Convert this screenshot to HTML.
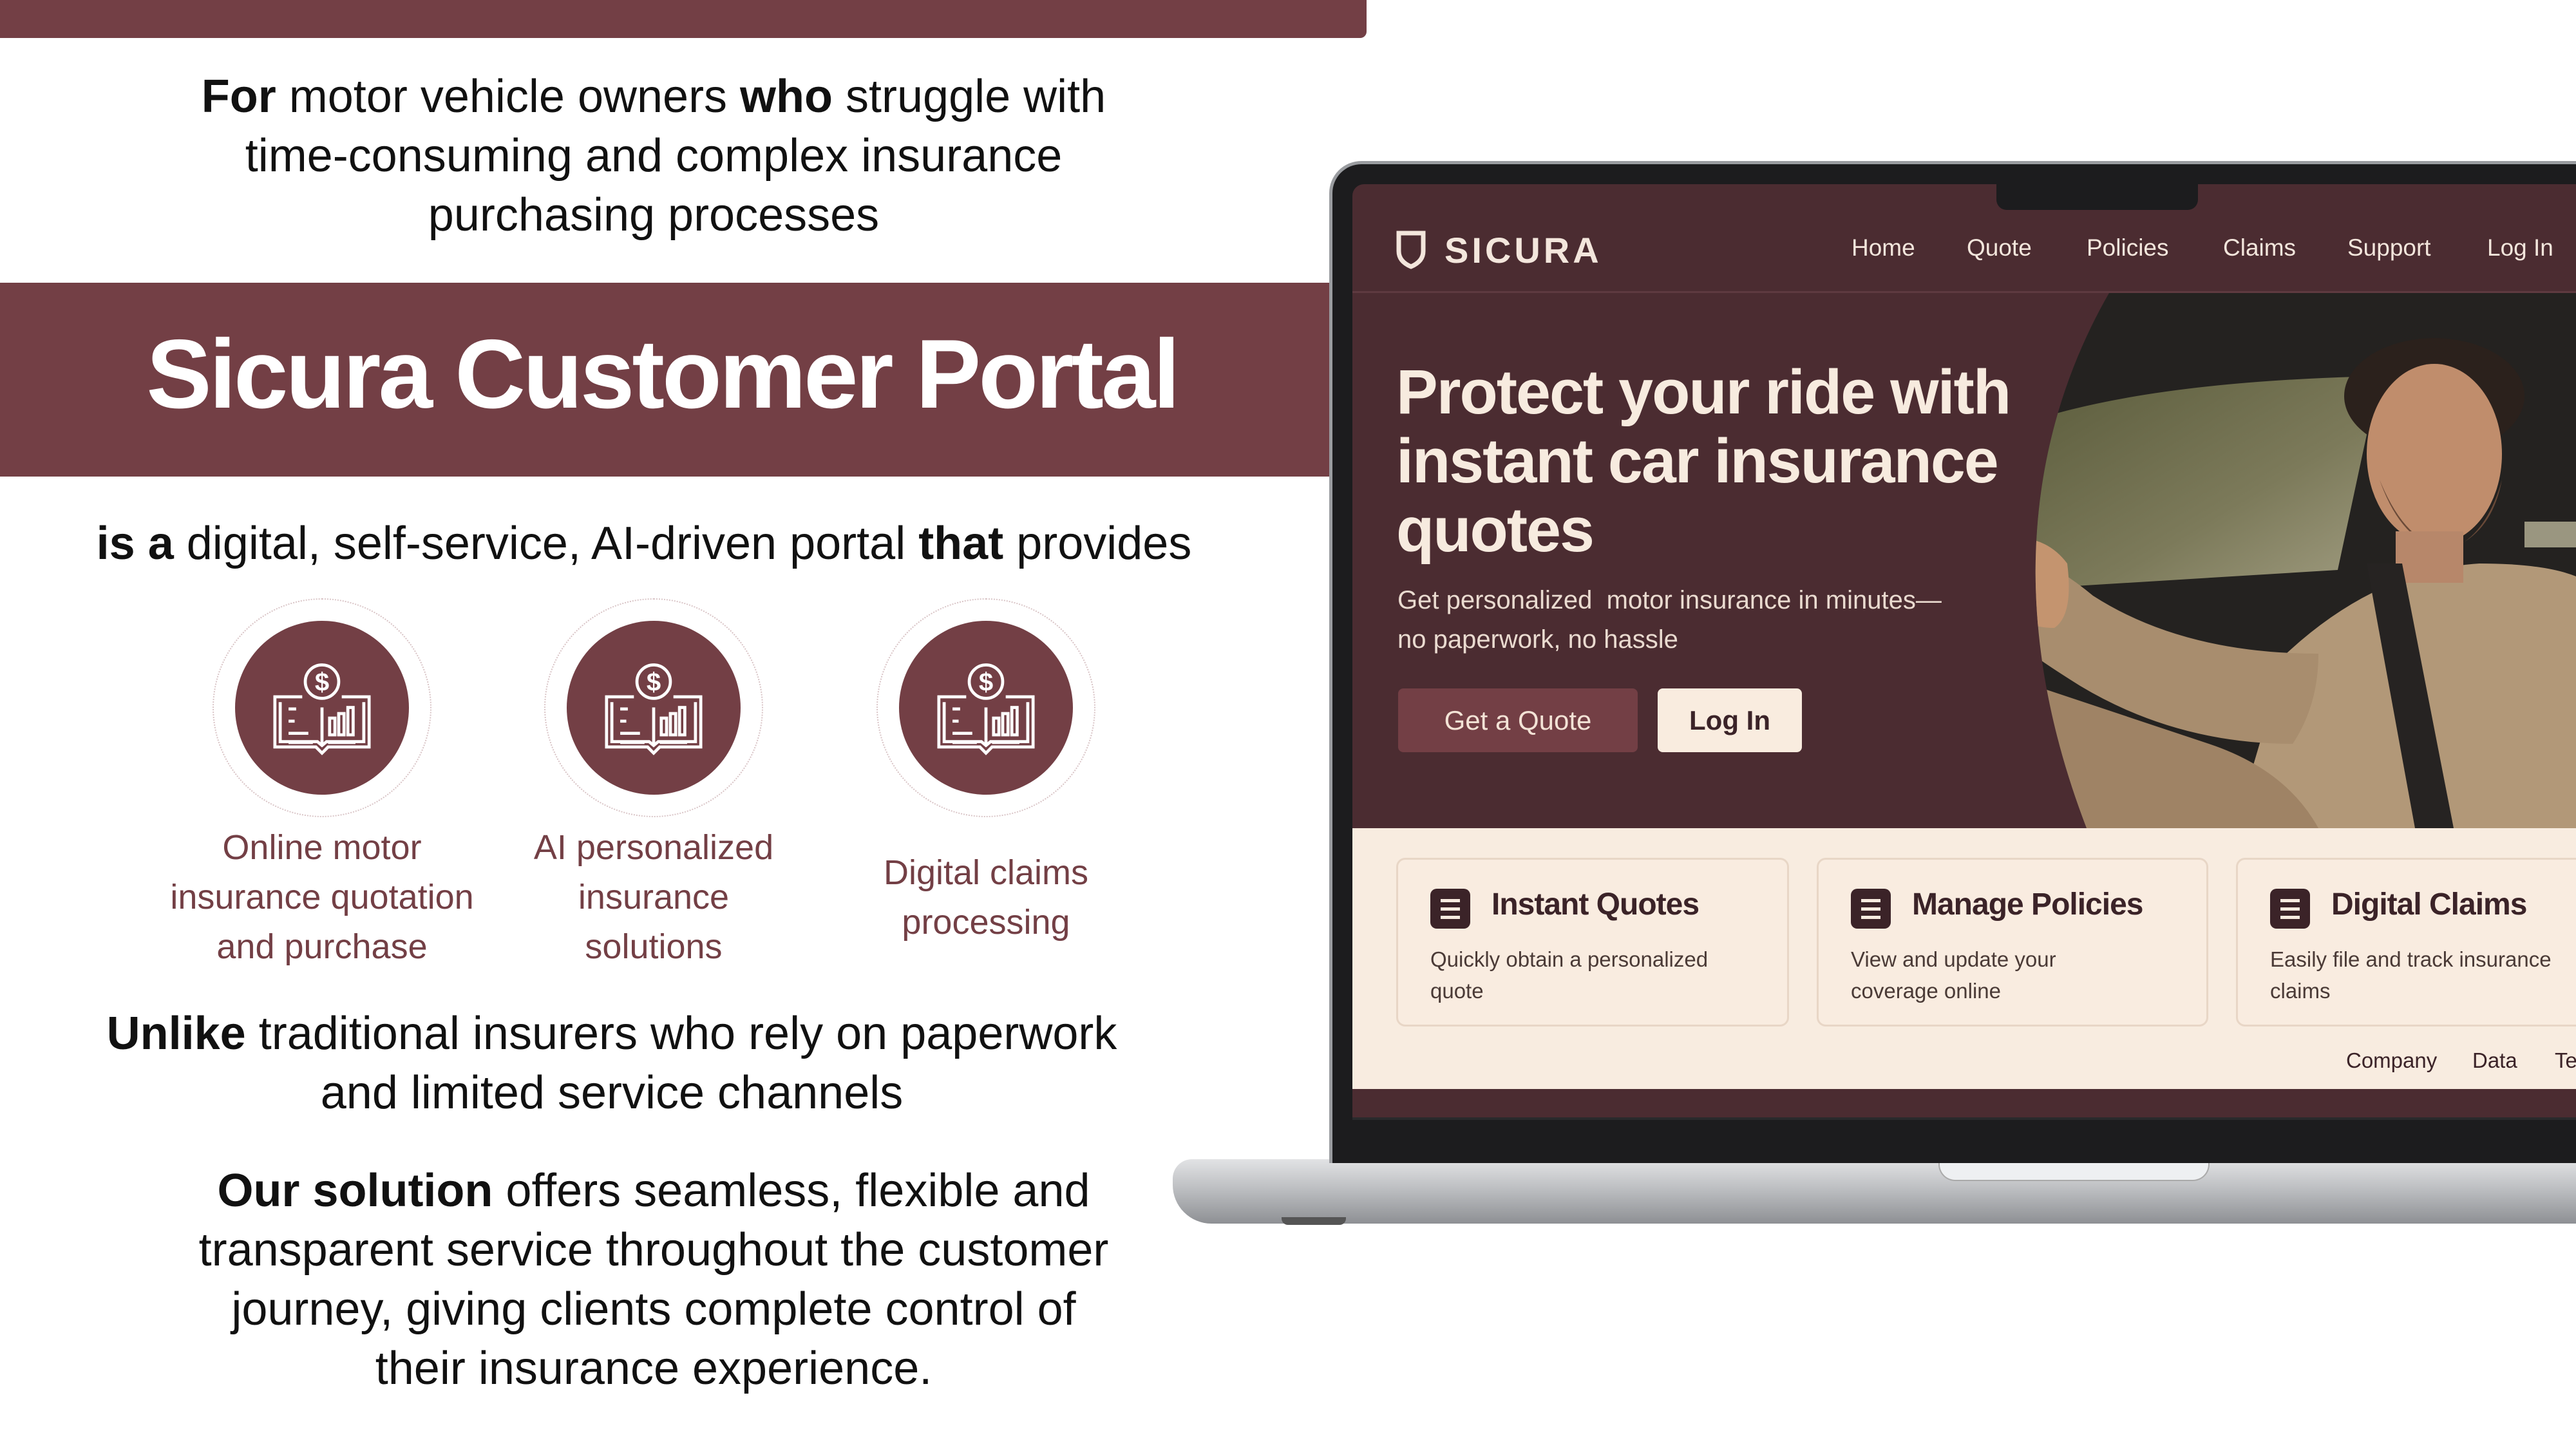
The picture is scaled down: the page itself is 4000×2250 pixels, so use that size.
<!DOCTYPE html>
<html><head><meta charset="utf-8"><style>
*{margin:0;padding:0;box-sizing:border-box}
body{width:4000px;height:2250px;overflow:hidden;background:#fff;font-family:"Liberation Sans",sans-serif;position:relative;color:#111}
.a{position:absolute}
.c{text-align:center;white-space:nowrap}
.lt{font-size:72px;line-height:92px;color:#111}
.lbl{font-size:54px;line-height:77px;color:#733f45;text-align:center;white-space:nowrap}
.circ{position:absolute;width:270px;height:270px;border-radius:50%;background:#733f45}
.ring{position:absolute;width:340px;height:340px;border-radius:50%;border:2px dotted #d9c4c6}
.nav{font-size:37px;color:#f3e6dc}
.card{position:absolute;top:1332px;height:262px;border:3px solid #e8d6c6;border-radius:14px;background:#f9ece0}
.card h3{position:absolute;left:145px;top:42px;font-size:48px;color:#3b2328;font-weight:bold;letter-spacing:-1px;white-space:nowrap}
.card p{position:absolute;left:50px;top:130px;font-size:33px;line-height:49px;color:#4a3a36}
.ic{position:absolute;left:50px;top:45px;width:62px;height:62px;border-radius:10px;background:#3b2328}
.ic i{position:absolute;left:16px;width:30px;height:5px;background:#f9ece0}
</style></head><body>
<div class="a" style="left:0;top:0;width:2122px;height:59px;background:#733f45;border-radius:0 0 10px 0"></div>
<div class="a c lt" style="left:0;width:2030px;top:104px"><b>For</b> motor vehicle owners <b>who</b> struggle with<br>time-consuming and complex insurance<br>purchasing processes</div>
<div class="a" style="left:0;top:439px;width:2064px;height:301px;background:#733f45"></div>
<div class="a c" style="left:0;width:2056px;top:496px;font-size:152px;line-height:170px;font-weight:bold;color:#fff;letter-spacing:-4px">Sicura Customer Portal</div>
<div class="a c lt" style="left:0;width:2000px;top:798px"><b>is a</b> digital, self-service, AI-driven portal <b>that</b> provides</div>

<div class="ring" style="left:330px;top:929px"></div><div class="circ" style="left:365px;top:964px"></div>
<div class="ring" style="left:845px;top:929px"></div><div class="circ" style="left:880px;top:964px"></div>
<div class="ring" style="left:1361px;top:929px"></div><div class="circ" style="left:1396px;top:964px"></div>
<svg class="a" style="left:0;top:0" width="2000" height="1300">
<defs><g id="ico" fill="none" stroke="#fff" stroke-width="4">
<circle cx="0" cy="-42" r="22"/><text x="0" y="-30" font-size="34" font-weight="bold" fill="#fff" stroke="none" text-anchor="middle" font-family="Liberation Sans">$</text>
<path d="M-26-22H-62V44H-8L0 52 8 44H62V-22H26"/>
<path d="M-55-15V37H-6L0 42 6 37H55V-15"/>
<path d="M0-8V42"/>
<path d="M-44-6H-34M-44 10H-36M-44 26H-18M-44 38H-12M8 38H44"/>
<rect x="10" y="6" width="7" height="22"/><rect x="22" y="0" width="7" height="28"/><rect x="34" y="-8" width="7" height="36"/>
</g></defs>
<use href="#ico" transform="translate(500,1108) scale(1.18)"/><use href="#ico" transform="translate(1015,1108) scale(1.18)"/><use href="#ico" transform="translate(1531,1108) scale(1.18)"/>
</svg>
<div class="a lbl" style="left:200px;width:600px;top:1278px">Online motor<br>insurance quotation<br>and purchase</div>
<div class="a lbl" style="left:715px;width:600px;top:1278px">AI personalized<br>insurance<br>solutions</div>
<div class="a lbl" style="left:1231px;width:600px;top:1317px">Digital claims<br>processing</div>
<div class="a c lt" style="left:0;width:1900px;top:1559px"><b>Unlike</b> traditional insurers who rely on paperwork<br>and limited service channels</div>
<div class="a c lt" style="left:0;width:2030px;top:1803px"><b>Our solution</b> offers seamless, flexible and<br>transparent service throughout the customer<br>journey, giving clients complete control of<br>their insurance experience.</div>

<!-- laptop -->
<div class="a" style="left:1821px;top:1800px;width:2200px;height:100px;background:linear-gradient(#e2e3e5,#b9bbbe 50%,#8e9094);border-radius:30px 0 0 60px"></div>
<div class="a" style="left:1990px;top:1890px;width:100px;height:12px;background:#555;border-radius:0 0 10px 10px"></div>
<div class="a" style="left:3010px;top:1804px;width:421px;height:30px;background:#eef0f2;border-radius:0 0 26px 26px;border:2px solid #aaa;border-top:none"></div>
<div class="a" style="left:2064px;top:250px;width:2000px;height:1556px;background:#1c1c1e;border-radius:50px 0 0 0;border:5px solid #9a9ca0;border-right:none;border-bottom:none"></div>
<div class="a" style="left:2100px;top:286px;width:1900px;height:1449px;background:#4b2c31;border-radius:18px 0 0 0"></div>
<div class="a" style="left:3100px;top:286px;width:313px;height:40px;background:#1c1c1e;border-radius:0 0 16px 16px"></div>
<div class="a" style="left:2100px;top:1735px;width:1900px;height:4px;background:#2a2a2c"></div>
<div class="a" style="left:2100px;top:452px;width:1900px;height:3px;background:#5e3a40"></div>
<svg class="a" style="left:2166px;top:356px" width="50" height="64" viewBox="0 0 50 64"><path d="M6 6H44V34Q44 50 25 58Q6 50 6 34Z" fill="none" stroke="#f3e6dc" stroke-width="7"/></svg>
<div class="a nav" style="left:2243px;top:356px;font-size:56px;font-weight:bold;letter-spacing:5px">SICURA</div>
<div class="a nav" style="left:2875px;top:364px">Home</div>
<div class="a nav" style="left:3054px;top:364px">Quote</div>
<div class="a nav" style="left:3240px;top:364px">Policies</div>
<div class="a nav" style="left:3452px;top:364px">Claims</div>
<div class="a nav" style="left:3645px;top:364px">Support</div>
<div class="a nav" style="left:3862px;top:364px">Log In</div>
<!-- photo -->
<svg class="a" style="left:3130px;top:455px" width="870" height="831" viewBox="0 0 870 831">
<defs><clipPath id="cp"><path d="M145 0C30 200-25 480 110 831H870V0Z"/></clipPath>
<linearGradient id="win" x1="0" y1="0" x2="1" y2="1"><stop offset="0" stop-color="#5b5c3c"/><stop offset=".6" stop-color="#7c7a5a"/><stop offset="1" stop-color="#a09c80"/></linearGradient></defs>
<g clip-path="url(#cp)">
<rect width="870" height="831" fill="#242220"/>
<path d="M20 200Q200 140 530 130L560 150 500 430 10 460Z" fill="url(#win)"/>
<rect x="790" y="355" width="80" height="40" fill="#9a9680"/>
<path d="M420 560Q560 430 720 420Q820 420 870 440V831H340Z" fill="#b29878"/>
<path d="M0 400Q60 420 120 470 260 560 470 560 470 640 430 700 250 700 100 610 20 560 0 540Z" fill="#a88d6e"/>
<path d="M0 600Q150 650 300 700 420 740 470 831H0Z" fill="#9f8365"/>
<path d="M0 380Q50 380 80 420 90 500 60 520 20 520 0 500Z" fill="#c4946f"/>
<ellipse cx="650" cy="160" rx="140" ry="90" fill="#2b211c"/>
<ellipse cx="650" cy="250" rx="105" ry="140" fill="#c08d6c"/>
<path d="M565 290Q610 400 680 395 740 370 755 290 730 380 670 400 600 390 565 290Z" fill="#6a4a38"/>
<rect x="590" y="370" width="105" height="80" fill="#b7876a"/>
<path d="M545 420L600 420 680 831 620 831Z" fill="#262322"/>
</g></svg>
<div class="a" style="left:2168px;top:555px;font-size:97px;line-height:107px;font-weight:bold;color:#f7ebdf;letter-spacing:-2px;white-space:nowrap">Protect your ride with<br>instant car insurance<br>quotes</div>
<div class="a" style="left:2170px;top:902px;font-size:40px;line-height:61px;color:#eadbd0;white-space:nowrap">Get personalized&nbsp; motor insurance in minutes—<br>no paperwork, no hassle</div>
<div class="a" style="left:2171px;top:1069px;width:372px;height:99px;background:#733f45;border-radius:8px;color:#f3e3d6;font-size:42px;line-height:99px;text-align:center">Get a Quote</div>
<div class="a" style="left:2574px;top:1069px;width:224px;height:99px;background:#f9ecdf;border-radius:8px;color:#3b2328;font-size:42px;line-height:99px;text-align:center;font-weight:bold">Log In</div>
<div class="a" style="left:2100px;top:1286px;width:1900px;height:405px;background:#f8ece0"></div>
<div class="card" style="left:2168px;width:610px"><div class="ic"><i style="top:16px"></i><i style="top:29px"></i><i style="top:42px"></i></div><h3>Instant Quotes</h3><p>Quickly obtain a personalized<br>quote</p></div>
<div class="card" style="left:2821px;width:608px"><div class="ic"><i style="top:16px"></i><i style="top:29px"></i><i style="top:42px"></i></div><h3>Manage Policies</h3><p>View and update your<br>coverage online</p></div>
<div class="card" style="left:3472px;width:600px"><div class="ic"><i style="top:16px"></i><i style="top:29px"></i><i style="top:42px"></i></div><h3>Digital Claims</h3><p>Easily file and track insurance<br>claims</p></div>
<div class="a" style="left:3643px;top:1628px;font-size:33px;color:#3b2328">Company</div>
<div class="a" style="left:3839px;top:1628px;font-size:33px;color:#3b2328">Data</div>
<div class="a" style="left:3967px;top:1628px;font-size:33px;color:#3b2328">Te</div>
<div class="a" style="left:2100px;top:1691px;width:1900px;height:44px;background:#4b2c31"></div>
</body></html>
